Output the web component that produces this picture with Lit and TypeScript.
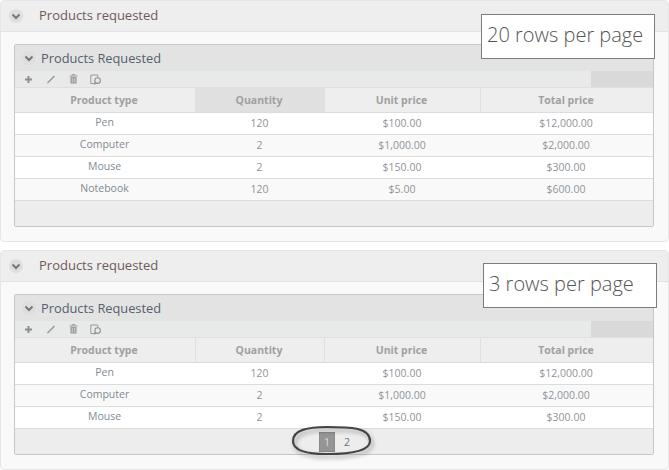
import { LitElement, css, html, svg } from 'lit';
import { customElement } from 'lit/decorators.js';

interface Row {
  type: string;
  qty: string;
  unit: string;
  total: string;
}

const ROWS: Row[] = [
  { type: 'Pen', qty: '120', unit: '$100.00', total: '$12,000.00' },
  { type: 'Computer', qty: '2', unit: '$1,000.00', total: '$2,000.00' },
  { type: 'Mouse', qty: '2', unit: '$150.00', total: '$300.00' },
  { type: 'Notebook', qty: '120', unit: '$5.00', total: '$600.00' }
];

const chevron = svg`<path d="M3.5 5.5 7 9l3.5-3.5" fill="none" stroke="#777" stroke-width="2"/>`;

@customElement('app-root')
export class AppRoot extends LitElement {
  static styles = css`
    :host {
      display: block;
      position: relative;
      width: 669px;
      height: 470px;
      overflow: hidden;
      background: #fff;
      font-family: 'Open Sans', sans-serif;
    }
    .panel {
      box-sizing: border-box;
      width: 669px;
      height: 242px;
      margin-bottom: 8px;
      border: 1px solid #e6e6e6;
      border-radius: 4px;
      background: #f9f9f9;
    }
    .panel.second {
      height: 220px;
    }
    .panel-head {
      display: flex;
      align-items: center;
      height: 30px;
      border-bottom: 1px solid #e2e2e2;
      background: #eee;
      color: #6e5a5a;
      font-size: 13px;
    }
    .panel-head span:last-child {
      padding-bottom: 2px;
    }
    .toggle {
      display: flex;
      align-items: center;
      justify-content: center;
      width: 14px;
      height: 14px;
      border-radius: 50%;
      background: #dedede;
    }
    .panel-head .toggle {
      margin: 0 16px 0 8px;
    }
    .grid {
      box-sizing: border-box;
      width: 640px;
      margin: 12px 0 0 13px;
      border: 1px solid #c8c8c2;
      border-radius: 2px;
      background: #fff;
    }
    .caption {
      display: flex;
      align-items: center;
      height: 26px;
      background: #e3e3e3;
      color: #54606e;
      font-size: 12.8px;
    }
    .caption span:last-child {
      padding-bottom: 1px;
    }
    .caption .toggle {
      margin: 0 5px 0 7px;
    }
    .tools {
      display: flex;
      justify-content: space-between;
      height: 16px;
      background: #e8e9e9;
      border-bottom: 1px solid #e0e0e0;
    }
    .tool-icons {
      display: flex;
      align-items: center;
      gap: 12px;
      padding-left: 9px;
      opacity: 0.8;
    }
    .tool-icons svg {
      display: block;
    }
    .tool-icons .trash {
      margin-left: 1px;
    }
    .tools-end {
      width: 62px;
      background: #d9d9d9;
    }
    .row {
      display: grid;
      grid-template-columns: 181px 129px 156px 1fr;
      height: 22px;
      border-bottom: 1px solid #dcdcdc;
      box-sizing: border-box;
      font-size: 10.5px;
      color: #8f9499;
      background: #fff;
    }
    .row.alt {
      background: #f9f9f9;
    }
    .row > div {
      display: flex;
      align-items: center;
      justify-content: center;
      box-sizing: border-box;
      padding: 0 2px 2px 0;
    }
    .row > .type {
      color: #828a92;
      padding-bottom: 4px;
    }
    .row.head {
      height: 25px;
      background: #eee;
      color: #a0a0a0;
      font-weight: 700;
    }
    .row.head > div {
      padding-bottom: 1px;
      border-right: 1px solid #e0e0e0;
    }
    .row.head > div:last-child {
      border-right: 0;
    }
    .row.head .sorted {
      background: #e0e0e0;
    }
    .foot {
      display: flex;
      align-items: center;
      justify-content: center;
      gap: 4px;
      height: 25px;
      background: #ededed;
      font-size: 10.5px;
      color: #6a7480;
      padding-left: 6px;
    }
    .page {
      width: 16px;
      height: 20px;
      line-height: 20px;
      text-align: center;
    }
    .page.current {
      background: #959595;
      border: 1px solid #8a8a8a;
      box-sizing: border-box;
      line-height: 18px;
      color: #ddd;
    }
    .note {
      position: absolute;
      box-sizing: border-box;
      border: 1px solid #7c7c7c;
      background: #fff;
      color: #555;
      font-size: 20px;
      font-weight: 300;
      line-height: 40px;
      white-space: nowrap;
    }
    .note.one {
      left: 481px;
      top: 14px;
      width: 174px;
      height: 45px;
      padding-left: 5px;
    }
    .note.two {
      left: 483px;
      top: 263px;
      width: 174px;
      height: 45px;
      padding-left: 5px;
    }
    .ring {
      position: absolute;
      left: 285px;
      top: 418px;
      filter: drop-shadow(2px 3px 2px rgba(0, 0, 0, 0.35));
    }
  `;

  private toggle() {
    return html`<span class="toggle"><svg width="14" height="14" viewBox="0 0 14 14">${chevron}</svg></span>`;
  }

  private toolIcons() {
    return html`<div class="tool-icons">
      <svg width="9" height="9" viewBox="0 0 9 9"><path d="M4.5 1v7M1 4.5h7" stroke="#777" stroke-width="2" fill="none"/></svg>
      <svg width="11" height="11" viewBox="0 0 11 11"><path d="M3 8.5 9.5 2" stroke="#888" stroke-width="1.6" fill="none"/><path d="M2 9.5 3.6 9 2.6 8z" fill="#777"/></svg>
      <svg class="trash" width="9" height="10" viewBox="0 0 9 10"><path d="M0.5 2h8M3 1.5V.6h3v.9" stroke="#888" fill="none"/><path d="M1.4 3h6.2v6.6H1.4z" fill="#8c8c8c"/><path d="M3.3 4v4.5M5.7 4v4.5" stroke="#ddd" stroke-width=".7"/></svg>
      <svg width="12" height="11" viewBox="0 0 12 11"><path d="M4.5 9.5H.8V1h7v2.5" stroke="#888" fill="none"/><circle cx="7.6" cy="6.6" r="2.8" stroke="#777" stroke-width="1.1" fill="none"/><path d="M5.6 8.7 4.2 10.2" stroke="#777" stroke-width="1.4"/></svg>
    </div>`;
  }

  private panel(rows: Row[], sorted: boolean, pager: boolean) {
    return html`<section class="panel ${pager ? 'second' : ''}">
      <div class="panel-head">${this.toggle()}<span>Products requested</span></div>
      <div class="grid">
        <div class="caption">${this.toggle()}<span>Products Requested</span></div>
        <div class="tools">${this.toolIcons()}<div class="tools-end"></div></div>
        <div class="row head">
          <div>Product type</div>
          <div class=${sorted ? 'sorted' : ''}>Quantity</div>
          <div>Unit price</div>
          <div>Total price</div>
        </div>
        ${rows.map(
          (r, i) => html`<div class="row ${i % 2 ? 'alt' : ''}">
            <div class="type">${r.type}</div>
            <div>${r.qty}</div>
            <div>${r.unit}</div>
            <div>${r.total}</div>
          </div>`
        )}
        <div class="foot">
          ${pager ? html`<span class="page current">1</span><span class="page">2</span>` : ''}
        </div>
      </div>
    </section>`;
  }

  render() {
    return html`
      ${this.panel(ROWS, true, false)}
      ${this.panel(ROWS.slice(0, 3), false, true)}
      <div class="note one">20 rows per page</div>
      <div class="note two">3 rows per page</div>
      <svg class="ring" width="92" height="46" viewBox="0 0 92 46">
        <path d="M8 23C8 12 23 9 42 9c22 0 43 0 43 14 0 11-22 13-43 13C22 36 8 33 8 23z" fill="none" stroke="#444" stroke-width="2.2"/>
      </svg>
    `;
  }
}
